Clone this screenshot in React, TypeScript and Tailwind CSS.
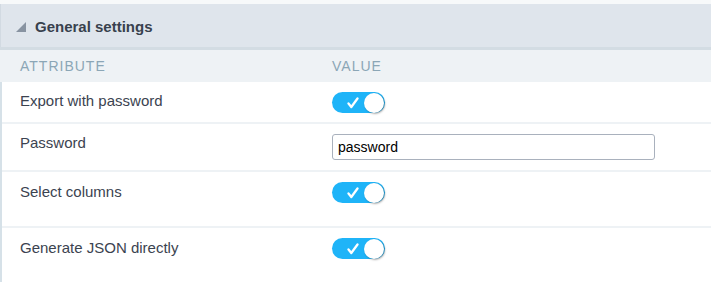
const rows = [
  { label: "Export with password", kind: "toggle", height: "h-[40px]", pad: "pt-[10px]" },
  { label: "Password", kind: "input", height: "h-[46px]", pad: "pt-[10px]" },
  { label: "Select columns", kind: "toggle", height: "h-[54px]", pad: "pt-[11px]" },
  { label: "Generate JSON directly", kind: "toggle", height: "h-[54px]", pad: "pt-[11px]" },
];

const Toggle = () => (
  <div className="w-[53px] h-[21px] rounded-full bg-[#1fb4f8] flex items-center justify-end pr-[1px] relative">
    <svg
      className="absolute left-[15px] top-[5px]"
      width="12"
      height="12"
      viewBox="0 0 12 12"
      fill="none"
    >
      <path d="M1.5 6.5 L4.3 10 L10.5 1.5" stroke="white" strokeWidth="2.3" strokeLinecap="round" strokeLinejoin="round" />
    </svg>
    <div className="w-[20px] h-[20px] rounded-full bg-white shadow-[1px_1px_2px_rgba(0,0,0,0.35)]" />
  </div>
);

export default function App() {
  return (
    <div className="w-[711px] h-[282px] overflow-hidden bg-white font-['Liberation_Sans',Arial,sans-serif]">
      <div className="h-[4px] bg-[#f7f9fa]" />

      {/* Panel header */}
      <div className="h-[43px] bg-[#dfe5ec] border-l border-[#d2dae2] flex items-center pt-[3px] pl-[15px] gap-[9px]">
        <svg width="10" height="10" viewBox="0 0 10 10">
          <polygon points="10,0 10,10 0,10" fill="#8893a1" />
        </svg>
        <span className="text-[15px] font-bold text-[#38414d]">General settings</span>
      </div>
      <div className="h-[3px] bg-[#d3dce3]" />

      {/* Column headings */}
      <div className="h-[32px] bg-[#eef2f5] flex items-center text-[14px] tracking-[1px] text-[#8ba6b6]">
        <div className="w-[332px] pl-[20px]">ATTRIBUTE</div>
        <div>VALUE</div>
      </div>

      {/* Attribute rows */}
      <div className="border-l-2 border-[#d6e1e8]">
        {rows.map((row, i) => (
          <div key={row.label}>
            {i > 0 && <div className="h-[2px] bg-[#eef2f5]" />}
            <div className={`${row.height} flex`}>
              <div className={`w-[330px] pl-[18px] ${row.pad} text-[15px] leading-[17px] text-[#3b4350]`}>
                {row.label}
              </div>
              <div className={row.kind === "toggle" ? "pt-[10px]" : "pt-[10px]"}>
                {row.kind === "toggle" ? (
                  <Toggle />
                ) : (
                  <input
                    readOnly
                    value="password"
                    className="w-[323px] h-[26px] border border-[#a9b1bd] rounded-[3px] px-[5px] text-[14px] text-black outline-none"
                  />
                )}
              </div>
            </div>
          </div>
        ))}
      </div>
    </div>
  );
}
